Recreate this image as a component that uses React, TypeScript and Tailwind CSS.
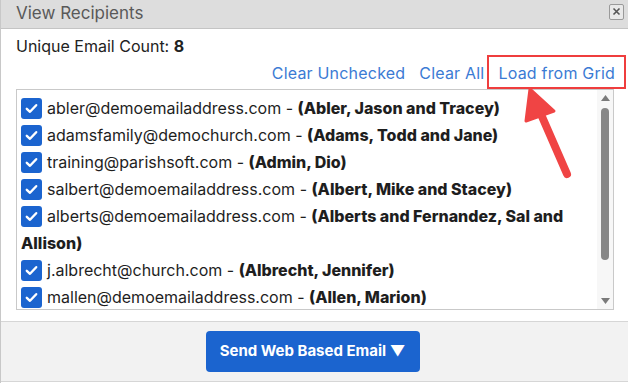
import React from "react";

const rows: { email: string; name: string }[] = [
  { email: "abler@demoemailaddress.com", name: "(Abler, Jason and Tracey)" },
  { email: "adamsfamily@demochurch.com", name: "(Adams, Todd and Jane)" },
  { email: "training@parishsoft.com", name: "(Admin, Dio)" },
  { email: "salbert@demoemailaddress.com", name: "(Albert, Mike and Stacey)" },
  { email: "alberts@demoemailaddress.com", name: "(Alberts and Fernandez, Sal and Allison)" },
  { email: "j.albrecht@church.com", name: "(Albrecht, Jennifer)" },
  { email: "mallen@demoemailaddress.com", name: "(Allen, Marion)" },
];

function Check() {
  return (
    <span className="inline-flex items-center justify-center w-[21px] h-[21px] rounded-[3px] bg-[#1b64cf] align-top mt-[3px] mr-[5px]">
      <svg width="13" height="11" viewBox="0 0 13 11" fill="none">
        <path d="M1.8 5.8 L5 8.8 L11.2 2.2" stroke="white" strokeWidth="2.4" strokeLinecap="round" strokeLinejoin="round" />
      </svg>
    </span>
  );
}

export default function App() {
  return (
    <div className="relative w-[628px] h-[383px] bg-white overflow-hidden" style={{ fontFamily: "Inter, 'Noto Sans', sans-serif" }}>
      <div className="flex flex-col h-full border-l border-[#c8c8c8]">
        <div className="h-[29px] flex items-center justify-between bg-[#dddddd] border-b border-[#c4c4c4] pl-[15px] pr-[4px]">
          <span className="text-[17px] text-[#595959]">View Recipients</span>
          <span className="w-[15px] h-[16px] border border-[#9a9a9a] rounded-[2px] bg-[#e9e9e9] flex items-center justify-center mb-[5px]">
            <svg width="9" height="9" viewBox="0 0 9 9"><path d="M1.5 1.5 L7.5 7.5 M7.5 1.5 L1.5 7.5" stroke="#555" strokeWidth="1.6" /></svg>
          </span>
        </div>
        <div className="flex-1 flex flex-col pl-[15px] pr-[13px] pt-[6px]">
          <div className="text-[16px] text-[#222] leading-[22px]">Unique Email Count: <b>8</b></div>
          <div className="flex justify-end gap-[14px] text-[16px] text-[#3b7bd4] leading-[22px] mt-[5px] tracking-[0.2px]">
            <span>Clear Unchecked</span>
            <span>Clear All</span>
            <span>Load from Grid</span>
          </div>
          <div className="mt-[5px] h-[221px] border border-[#c9c9c9] flex mr-[1px]">
            <div className="flex-1 pl-[4px] pt-[5px] text-[16px] text-[#1e1e1e] leading-[27px] overflow-hidden">
              {rows.map((r) => (
                <div key={r.email}>
                  <Check />
                  {r.email} - <span className="font-extrabold">{r.name}</span>
                </div>
              ))}
            </div>
            <div className="w-[16px] flex flex-col items-center bg-[#f7f7f7] py-[5px]">
              <svg width="9" height="6" viewBox="0 0 9 6"><path d="M4.5 0 L9 6 L0 6 Z" fill="#7a7a7a" /></svg>
              <div className="w-[8px] h-[152px] rounded-full bg-[#878787] mt-[7px]" />
              <div className="flex-1" />
              <svg width="9" height="6" viewBox="0 0 9 6"><path d="M0 0 L9 0 L4.5 6 Z" fill="#7a7a7a" /></svg>
            </div>
          </div>
        </div>
        <div className="h-[61px] bg-[#f2f2f2] border-t border-b border-[#d6d6d6] flex items-center justify-center mb-[1px]">
          <button className="h-[41px] w-[214px] rounded-[4px] bg-[#1b64cf] text-white font-bold text-[15px] mr-[4px]">
            Send Web Based Email ▼
          </button>
        </div>
      </div>
      <div className="absolute left-[487px] top-[55px] w-[139px] h-[34px] border-2 border-[#ef3e3e]" />
      <svg className="absolute left-[515px] top-[84px]" width="70" height="100" viewBox="0 0 70 100">
        <path d="M52 90 L25 28" stroke="#f04444" strokeWidth="8" strokeLinecap="round" />
        <path d="M15 5 L39 27 L11 37 Z" fill="#f04444" stroke="#f04444" strokeWidth="3" strokeLinejoin="round" />
      </svg>
    </div>
  );
}
